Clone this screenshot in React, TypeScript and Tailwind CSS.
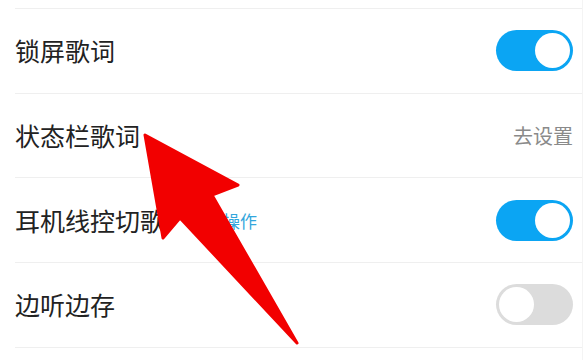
import React from "react";

type RowProps = {
  label: string;
  extra?: string;
  right: React.ReactNode;
};

function Toggle({ on }: { on: boolean }) {
  return (
    <div
      className={`w-[77px] h-[41px] rounded-full p-[3px] flex items-center ${
        on ? "bg-[#0ba5f3] justify-end" : "bg-[#dcdcdc] justify-start"
      }`}
    >
      <div className="w-[35px] h-[35px] rounded-full bg-white" />
    </div>
  );
}

function Row({ label, extra, right }: RowProps) {
  return (
    <div className="h-[83.7px] box-content border-b border-[#efefef] flex items-center justify-between pr-[9px]">
      <div className="flex items-center">
        <span className="text-[25px] text-[#222] leading-none">{label}</span>
        {extra && (
          <span className="ml-[24px] text-[17px] text-[#33a6dc] leading-none">{extra}</span>
        )}
      </div>
      {right}
    </div>
  );
}

export default function App() {
  return (
    <div
      className="relative w-[588px] h-[360px] bg-white overflow-hidden"
      style={{ fontFamily: '"Noto Sans CJK SC", "Noto Sans", sans-serif' }}
    >
      <div className="w-[583px] h-full border-r border-[#f4f4f4] pl-[15px]">
        <div className="h-[8px] box-content border-b border-[#efefef]" />
        <Row label="锁屏歌词" right={<Toggle on />} />
        <Row
          label="状态栏歌词"
          right={<span className="text-[20px] text-[#8a8a8a] leading-none">去设置</span>}
        />
        <Row label="耳机线控切歌" extra="查看操作" right={<Toggle on />} />
        <Row label="边听边存" right={<Toggle on={false} />} />
      </div>

      {/* Red arrow overlay */}
      <svg className="absolute inset-0" width="588" height="360" viewBox="0 0 588 360">
        <polygon
          points="145,135 238,185 212,195 297,343 180,218 163,238"
          fill="#f20000"
          stroke="#f20000"
          strokeWidth={3}
          strokeLinejoin="round"
        />
      </svg>
    </div>
  );
}
